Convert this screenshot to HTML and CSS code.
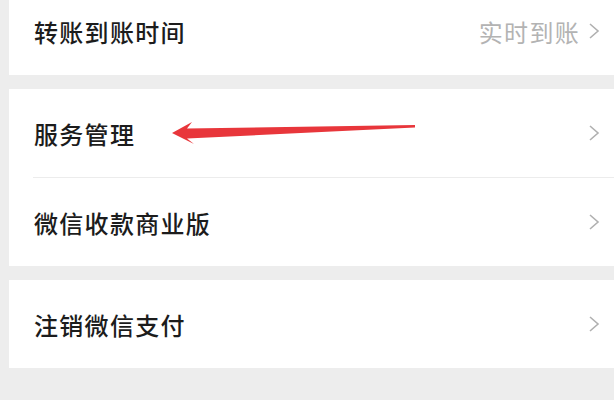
FILE: index.html
```html
<!DOCTYPE html>
<html lang="zh-CN">
<head>
<meta charset="utf-8">
<link rel="stylesheet" href="styles.css">
</head>
<body>
<div class="page">
  <div class="card card-first">
    <div class="row">
      <span class="label">转账到账时间</span>
      <span class="value">实时到账</span>
      <svg class="chev" viewBox="0 0 12 18"><path d="M2 2 L10 9 L2 16" /></svg>
    </div>
  </div>
  <div class="card">
    <div class="row">
      <span class="label">服务管理</span>
      <svg class="chev" viewBox="0 0 12 18"><path d="M2 2 L10 9 L2 16" /></svg>
    </div>
    <div class="divider"></div>
    <div class="row">
      <span class="label">微信收款商业版</span>
      <svg class="chev" viewBox="0 0 12 18"><path d="M2 2 L10 9 L2 16" /></svg>
    </div>
  </div>
  <div class="card">
    <div class="row">
      <span class="label">注销微信支付</span>
      <svg class="chev" viewBox="0 0 12 18"><path d="M2 2 L10 9 L2 16" /></svg>
    </div>
  </div>
</div>
<svg class="arrow" viewBox="0 0 614 400" width="614" height="400">
  <polygon points="172,133 192,122 187,128.5 415,125 415,127.4 187,138.5 194,144" fill="#e8363b"/>
</svg>
</body>
</html>
```
FILE: styles.css
```css
html, body {
  margin: 0;
  padding: 0;
}
body {
  width: 614px;
  height: 400px;
  overflow: hidden;
  background: #ededed;
  font-family: "Noto Sans CJK SC", "Noto Sans", sans-serif;
  position: relative;
}
.page {
  display: flex;
  flex-direction: column;
  gap: 14px;
  padding-left: 9px;
}
.card {
  background: #ffffff;
  display: flex;
  flex-direction: column;
}
.card-first {
  margin-top: -13px;
}
.row {
  height: 88px;
  display: flex;
  align-items: center;
  padding-left: 25px;
  padding-right: 14px;
}
.label {
  flex: 1;
  font-size: 24px;
  letter-spacing: 1.3px;
  color: #1c1c1c;
  font-weight: 500;
}
.value {
  font-size: 24px;
  letter-spacing: 1.3px;
  color: #b3b3b3;
  margin-right: 8px;
}
.chev {
  width: 12px;
  height: 18px;
  fill: none;
  stroke: #b0b0b0;
  stroke-width: 1.6;
}
.divider {
  height: 1px;
  background: #ececec;
  margin-left: 24px;
}
.arrow {
  position: absolute;
  left: 0;
  top: 0;
}
```
